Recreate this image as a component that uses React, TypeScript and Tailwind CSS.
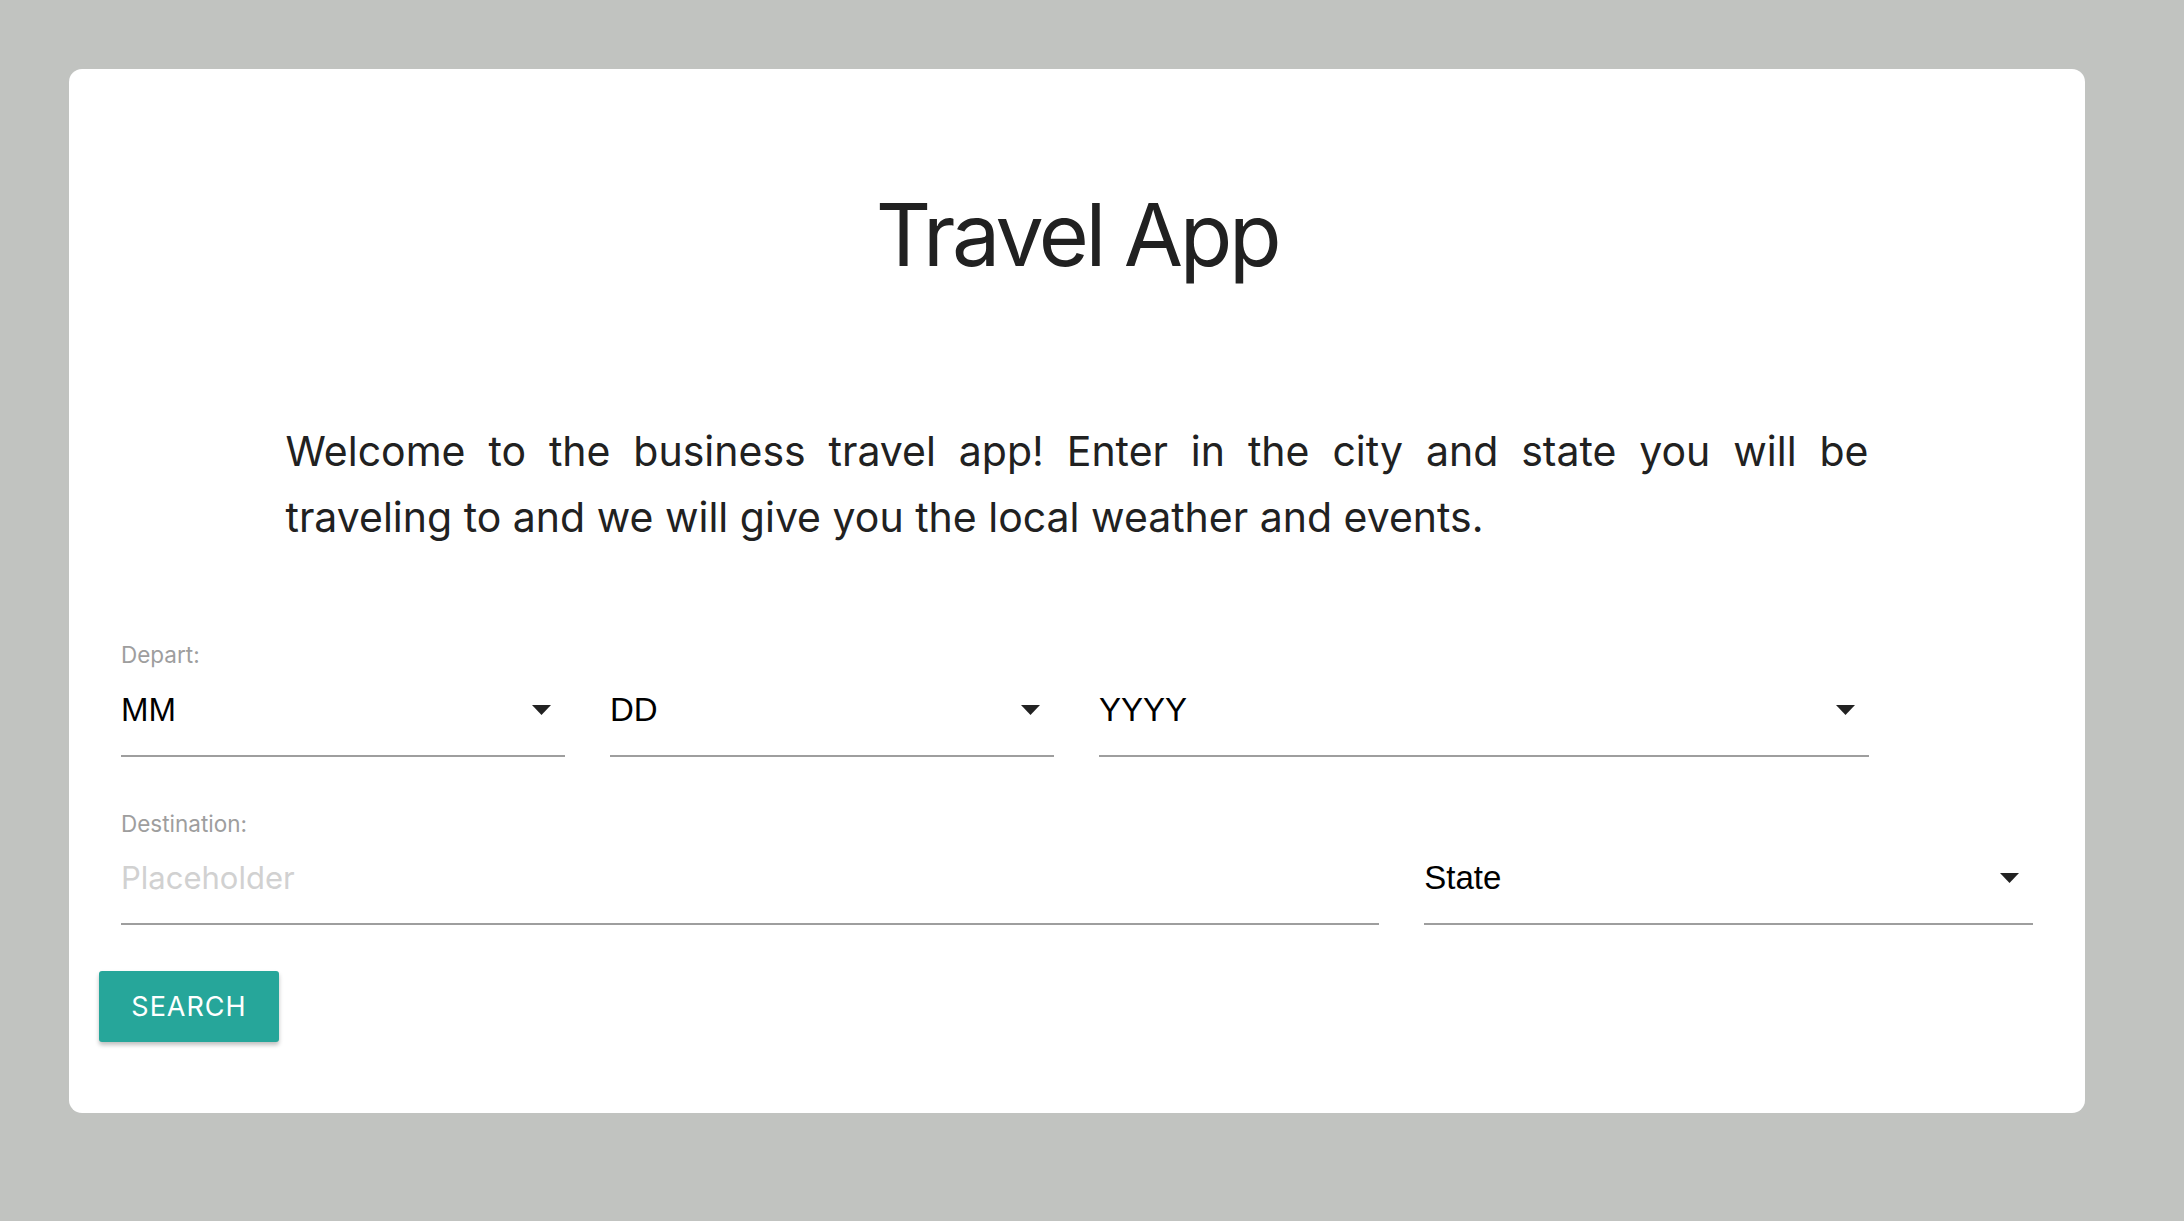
import React from 'react'

const sans = "font-['Inter','Noto_Sans',sans-serif]"
const native = "font-['Liberation_Sans','Arial',sans-serif]"

function Caret() {
  return (
    <svg width="19" height="10" viewBox="0 0 19 10" className="mr-[14px] shrink-0">
      <path d="M0 0h19L9.5 10z" fill="#222" />
    </svg>
  )
}

function SelectField({ value, width }: { value: string; width: string }) {
  return (
    <div className={`${width} flex items-center justify-between border-b-2 border-[#9e9e9e] pb-[25px]`}>
      <span className={`${native} text-[33px] leading-[40px] text-black`}>{value}</span>
      <Caret />
    </div>
  )
}

function Label({ children }: { children: React.ReactNode }) {
  return <div className={`${sans} text-[22.5px] leading-[22px] text-[#9e9e9e]`}>{children}</div>
}

export default function App() {
  return (
    <div className="min-h-screen bg-[#c1c3c0] p-[69px]">
      <div className="w-[2016px] rounded-[13px] bg-white pt-[123px] pb-[71px] text-[#212121]">
        <h1 className={`${sans} text-center text-[86px] leading-[86px] font-normal tracking-[-3.4px]`}>Travel App</h1>

        <p className={`${sans} mx-auto mt-[141px] w-[1583px] text-justify text-[41px] leading-[65.5px]`}>
          Welcome to the business travel app! Enter in the city and state you will be traveling to and we will give you
          the local weather and events.
        </p>

        <form className="mt-[94px] px-[52px]">
          <Label>Depart:</Label>
          <div className="mt-[24px] flex gap-[45px]">
            <SelectField value="MM" width="w-[444px]" />
            <SelectField value="DD" width="w-[444px]" />
            <SelectField value="YYYY" width="w-[770px]" />
          </div>

          <div className="mt-[56px] flex items-end gap-[45px]">
            <div className="w-[1259px]">
              <Label>Destination:</Label>
              <div className="mt-[23px] border-b-2 border-[#9e9e9e] pb-[25px]">
                <input
                  placeholder="Placeholder"
                  className={`${sans} block h-[40px] w-full text-[31px] leading-[40px] outline-none placeholder:text-[#d1d1d1]`}
                />
              </div>
            </div>
            <SelectField value="State" width="w-[609px]" />
          </div>

          <button
            type="button"
            className={`${sans} -ml-[22px] mt-[46px] h-[71px] w-[180px] rounded-[3px] bg-[#26a69a] pt-[2px] text-[27px] tracking-[1px] text-white shadow-[0_3px_4px_rgba(0,0,0,0.25)]`}
          >
            SEARCH
          </button>
        </form>
      </div>
    </div>
  )
}
